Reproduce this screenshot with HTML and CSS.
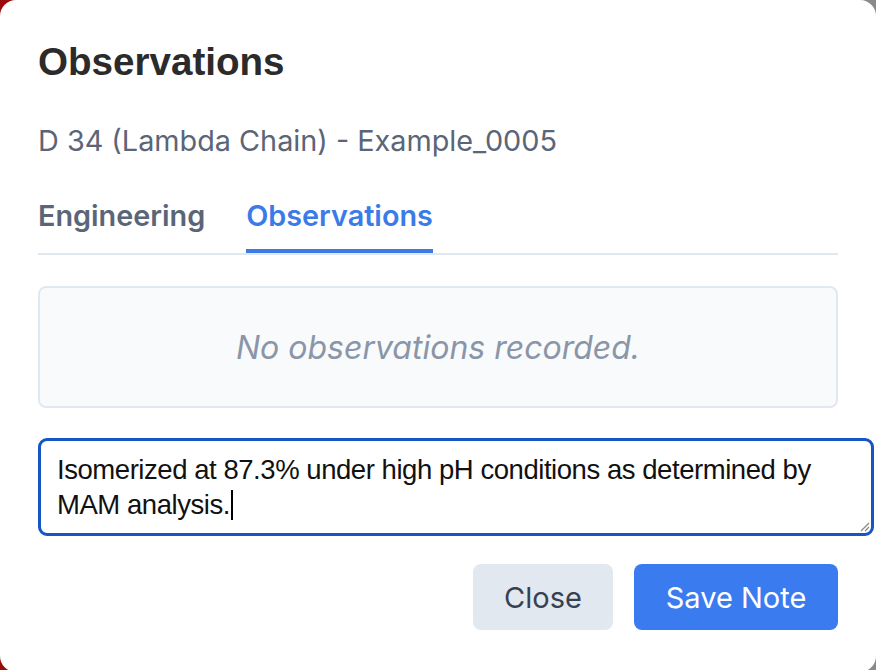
FILE: index.html
```html
<!DOCTYPE html>
<html>
<head>
<meta charset="utf-8">
<link rel="stylesheet" href="styles.css">
</head>
<body>
<div class="backdrop">
  <div class="modal">
    <h1 class="title">Observations</h1>
    <p class="subtitle">D 34 (Lambda Chain) - Example_0005</p>
    <div class="tabs">
      <div class="tab">Engineering</div>
      <div class="tab active">Observations</div>
    </div>
    <div class="empty">No observations recorded.</div>
    <div class="note">
      <div class="note-text">Isomerized at 87.3% under high pH conditions as determined by MAM analysis.<span class="caret"></span></div>
      <svg class="grip" width="12" height="12" viewBox="0 0 12 12"><path d="M11 3 L3 11 M11 7 L7 11" stroke="#888" stroke-width="1.2" fill="none"/></svg>
    </div>
    <div class="actions">
      <button class="btn btn-close">Close</button>
      <button class="btn btn-save">Save Note</button>
    </div>
  </div>
</div>
</body>
</html>
```
FILE: styles.css
```css
html, body {
  margin: 0;
  padding: 0;
  width: 876px;
  height: 670px;
  overflow: hidden;
}
.backdrop {
  width: 876px;
  height: 670px;
  background: linear-gradient(to right, #9a0c0c 0 50%, #8a8a8a 50% 100%);
}
.modal {
  box-sizing: border-box;
  width: 876px;
  height: 672px;
  background: #ffffff;
  border-radius: 16px;
  padding: 0 38px;
  display: flex;
  flex-direction: column;
}
.title {
  margin: 36px 0 0 0;
  font-family: "Liberation Sans", Arial, sans-serif;
  font-weight: bold;
  font-size: 38.6px;
  line-height: 52px;
  color: #2b2b2b;
}
.subtitle {
  margin: 36px 0 0 0;
  font-family: Inter, sans-serif;
  font-size: 28.8px;
  line-height: 34px;
  color: #5a6578;
}
.tabs {
  margin-top: 41px;
  display: flex;
  gap: 41px;
  border-bottom: 2px solid #e2e8f0;
  width: 800px;
}
.tab {
  font-family: Inter, sans-serif;
  font-weight: 600;
  font-size: 28.8px;
  line-height: 34px;
  color: #5a6578;
  padding-bottom: 16px;
  border-bottom: 4px solid transparent;
}
.tab.active {
  color: #3b7be8;
  border-bottom-color: #3b7be8;
}
.empty {
  margin-top: 31px;
  box-sizing: border-box;
  width: 800px;
  height: 122px;
  background: #f8fafc;
  border: 2px solid #e2e8f0;
  border-radius: 8px;
  display: flex;
  align-items: center;
  justify-content: center;
  font-family: Inter, sans-serif;
  font-style: italic;
  font-size: 32px;
  color: #8a96a8;
}
.note {
  position: relative;
  margin-top: 30px;
  box-sizing: border-box;
  width: 836px;
  height: 98px;
  border: 3px solid #1656c4;
  border-radius: 9px;
  padding: 11px 16px;
}
.note-text {
  font-family: "Liberation Sans", Arial, sans-serif;
  font-size: 27.5px;
  letter-spacing: -0.45px;
  line-height: 35px;
  color: #111111;
}
.caret {
  display: inline-block;
  width: 2px;
  height: 30px;
  background: #000;
  vertical-align: -6px;
  margin-left: 1px;
}
.grip {
  position: absolute;
  right: 1px;
  bottom: 1px;
}
.actions {
  margin-top: 28px;
  width: 800px;
  display: flex;
  justify-content: flex-end;
  gap: 21px;
}
.btn {
  border: none;
  border-radius: 8px;
  height: 66px;
  font-family: Inter, sans-serif;
  font-size: 29px;
  padding: 0;
}
.btn-close {
  background: #e2e8f0;
  color: #374151;
  width: 140px;
}
.btn-save {
  background: #3b7bf0;
  color: #ffffff;
  width: 204px;
}
```
